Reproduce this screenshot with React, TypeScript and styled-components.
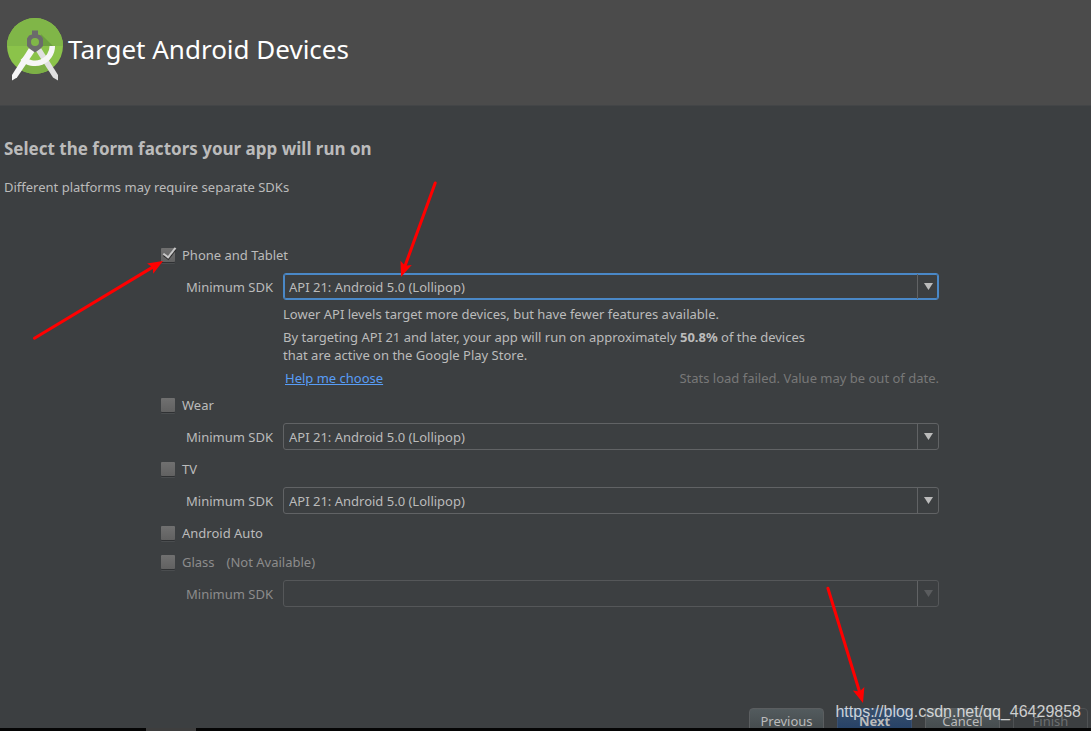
import React from "react";
import styled, { createGlobalStyle, css } from "styled-components";

const GlobalStyle = createGlobalStyle`
  *, *::before, *::after { box-sizing: border-box; }
  body {
    margin: 0;
    background: #3c3f41;
    color: #bbbbbb;
    font: 13px/18px "Noto Sans", "Open Sans", sans-serif;
  }
`;

const Page = styled.div`
  position: relative;
  display: flex;
  flex-direction: column;
  min-height: 100vh;
  overflow: hidden;
`;

const Header = styled.header`
  display: flex;
  align-items: flex-start;
  gap: 4px;
  height: 106px;
  padding: 16px 6px;
  background: #4b4b4b;
  border-bottom: 1px solid #434547;
`;

const Logo = styled.svg`
  flex: none;
  width: 58px;
  height: 66px;
`;

const Title = styled.h1`
  margin: 0;
  color: #ffffff;
  font-size: 26px;
  line-height: 66px;
  font-weight: 400;
`;

const Main = styled.main`
  flex: 1;
  padding: 31px 4px 0;
`;

const Heading = styled.h2`
  margin: 0 0 17px;
  font-size: 17px;
  line-height: 24px;
  font-weight: 700;
`;

const Intro = styled.p`
  margin: 0;
`;

const Form = styled.form`
  display: flex;
  flex-direction: column;
  gap: 8px;
  margin: 48px 148px 0 157px;
`;

const CheckRow = styled.div`
  display: flex;
  align-items: center;
  height: 21px;
`;

const CheckLabel = styled.label<{ $dim?: boolean }>`
  display: flex;
  align-items: center;
  gap: 7px;
  color: ${(p) => (p.$dim ? "#8c8c8c" : "#bbbbbb")};
`;

const tick = css`
  &::after {
    content: "";
    position: absolute;
    left: 5px;
    top: -3px;
    width: 7px;
    height: 13px;
    border: solid #c8c8c8;
    border-width: 0 2px 2px 0;
    transform: rotate(38deg);
    filter: drop-shadow(1px 1px 0 #2b2b2b);
  }
`;

const CheckBox = styled.input`
  appearance: none;
  position: relative;
  width: 14px;
  height: 14px;
  margin: 0;
  border-radius: 1px;
  background: linear-gradient(#707070, #616161);
  box-shadow: 0 1px 0 #2f3133, 0 2px 0 #4a4d4f;
  &:checked {
    ${tick}
  }
`;

const Note = styled.span`
  margin-left: 12px;
  color: #8c8c8c;
`;

const SdkRow = styled.div`
  display: flex;
  align-items: center;
  padding-left: 25px;
`;

const SdkLabel = styled.label<{ $dim?: boolean }>`
  flex: none;
  width: 97px;
  color: ${(p) => (p.$dim ? "#8c8c8c" : "#bbbbbb")};
`;

const Combo = styled.div<{ $state: "focused" | "normal" | "disabled" }>`
  display: flex;
  flex: 1;
  position: relative;
  height: 27px;
  border-radius: 3px;
  border: 1px solid
    ${(p) => ({ focused: "#4a88c7", normal: "#616365", disabled: "#555759" })[p.$state]};
  ${(p) => p.$state === "focused" && "box-shadow: inset 0 0 0 1px #4a88c7;"}
  color: ${(p) => (p.$state === "disabled" ? "#5a5c5e" : "#bbbbbb")};
`;

const ComboSelect = styled.select`
  appearance: none;
  flex: 1;
  min-width: 0;
  padding: 0 26px 0 5px;
  border: 0;
  outline: 0;
  background: transparent;
  color: inherit;
  font: inherit;
  opacity: 1;
`;

const ComboArrow = styled.span`
  position: absolute;
  top: 0;
  right: 0;
  bottom: 0;
  display: flex;
  align-items: center;
  justify-content: center;
  width: 21px;
  border-left: 1px solid #616365;
  pointer-events: none;
`;

const Details = styled.div`
  display: flex;
  flex-direction: column;
  gap: 5px;
  margin: -3px 0 -1px 122px;
  p {
    margin: 0;
  }
`;

const Description = styled.p`
  max-width: 540px;
`;

const HelpRow = styled.div`
  display: flex;
  justify-content: space-between;
  padding-left: 2px;
`;

const HelpLink = styled.a`
  color: #589df6;
`;

const Stats = styled.span`
  color: #787878;
`;

const Footer = styled.footer`
  display: flex;
  justify-content: flex-end;
  align-items: flex-start;
  gap: 13px;
  height: 20px;
  padding-right: 3px;
  overflow: hidden;
`;

const Button = styled.button<{ $primary?: boolean }>`
  flex: none;
  width: 75px;
  height: 26px;
  padding: 0;
  border: 1px solid ${(p) => (p.$primary ? "#3b5070" : "#5b5e60")};
  border-radius: 4px;
  background: ${(p) =>
    p.$primary ? "linear-gradient(#384f6b, #233f66)" : "linear-gradient(#535b5e, #43494b)"};
  color: #bbbbbb;
  font: inherit;
  font-weight: ${(p) => (p.$primary ? 700 : 400)};
  &:disabled {
    background: transparent;
    border-color: #4f5254;
    color: #6d6f71;
  }
`;

const Taskbar = styled.div`
  height: 3px;
  padding-left: 146px;
  background: #050505;
  &::before {
    content: "";
    display: block;
    width: 50px;
    height: 3px;
    background: #3e3e3e;
  }
`;

const Arrows = styled.svg`
  position: absolute;
  top: 0;
  left: 0;
  pointer-events: none;
`;

const Watermark = styled.span`
  position: absolute;
  right: 10px;
  bottom: 10px;
  color: rgba(255, 255, 255, 0.75);
  font: 16px/18px "Liberation Sans", Arial, sans-serif;
`;

const LOLLIPOP = "API 21: Android 5.0 (Lollipop)";

function StudioLogo() {
  return (
    <Logo viewBox="0 0 58 66" aria-hidden="true">
      <defs>
        <clipPath id="disc">
          <circle cx="29" cy="30" r="28" />
        </clipPath>
      </defs>
      <circle cx="29" cy="30" r="28" fill="#8bc34a" />
      <g clipPath="url(#disc)">
        <rect x="0" y="0" width="58" height="30" fill="#80b648" />
        <path d="M35 18 47 30H37Z" fill="#6c9f3e" />
        <path d="M16 46 Q29 54 40 47 L47 60 H12Z" fill="#7db046" />
      </g>
      <path d="M23 32 6 59 V64.500 L11 61.500 29 35Z" fill="#f6f6f6" />
      <path d="M35 32 52 59 V64.500 L47 61.500 30 35Z" fill="#e0e0e0" />
      <path d="M46.300 30 A17.300 17.300 0 0 1 16.500 42" fill="none" stroke="#f6f6f6" strokeWidth="5.500" />
      <path d="M26 14.500h6v4l3 1 2 3v7.500l-3 3-5 3.500-5-3.500-3-3v-7.500l2-3 3-1z" fill="#6b6b6b" />
      <circle cx="29" cy="26" r="4" fill="#80b648" />
    </Logo>
  );
}

type SdkProps = { id: string; value?: string; state: "focused" | "normal" | "disabled" };

function SdkField({ id, value = "", state }: SdkProps) {
  const disabled = state === "disabled";
  return (
    <SdkRow>
      <SdkLabel htmlFor={id} $dim={disabled}>
        Minimum SDK
      </SdkLabel>
      <Combo $state={state}>
        <ComboSelect id={id} disabled={disabled}>
          <option>{value}</option>
        </ComboSelect>
        <ComboArrow>
          <svg width="9" height="7" viewBox="0 0 9 7" aria-hidden="true">
            <path d="M0 0h9L4.500 7z" fill="currentColor" />
          </svg>
        </ComboArrow>
      </Combo>
    </SdkRow>
  );
}

type FactorProps = { label: string; checked?: boolean; disabled?: boolean; note?: string };

function FormFactor({ label, checked, disabled, note }: FactorProps) {
  return (
    <CheckRow>
      <CheckLabel $dim={disabled}>
        <CheckBox type="checkbox" defaultChecked={checked} disabled={disabled} />
        {label}
      </CheckLabel>
      {note && <Note>{note}</Note>}
    </CheckRow>
  );
}

const ARROWS = [
  { x: 163, y: 261, length: 150, angle: -31 },
  { x: 401, y: 277, length: 100, angle: 110 },
  { x: 863, y: 703, length: 120, angle: 73 },
];

function PointerArrows() {
  return (
    <Arrows width="100%" height="100%" aria-hidden="true">
      {ARROWS.map((a) => (
        <g key={a.x} transform={`translate(${a.x} ${a.y}) rotate(${a.angle})`}>
          <path d={`M${-a.length} 0H-10`} stroke="#ff0000" strokeWidth="3" strokeLinecap="round" />
          <path d="M0 0-15-6-12 0-15 6z" fill="#ff0000" />
        </g>
      ))}
    </Arrows>
  );
}

export default function App() {
  return (
    <Page>
      <GlobalStyle />
      <Header>
        <StudioLogo />
        <Title>Target Android Devices</Title>
      </Header>
      <Main>
        <Heading>Select the form factors your app will run on</Heading>
        <Intro>Different platforms may require separate SDKs</Intro>
        <Form>
          <FormFactor label="Phone and Tablet" checked />
          <SdkField id="sdk-phone" value={LOLLIPOP} state="focused" />
          <Details>
            <p>Lower API levels target more devices, but have fewer features available.</p>
            <Description>
              By targeting API 21 and later, your app will run on approximately <b>50.8%</b> of the
              devices that are active on the Google Play Store.
            </Description>
            <HelpRow>
              <HelpLink href="#help">Help me choose</HelpLink>
              <Stats>Stats load failed. Value may be out of date.</Stats>
            </HelpRow>
          </Details>
          <FormFactor label="Wear" />
          <SdkField id="sdk-wear" value={LOLLIPOP} state="normal" />
          <FormFactor label="TV" />
          <SdkField id="sdk-tv" value={LOLLIPOP} state="normal" />
          <FormFactor label="Android Auto" />
          <FormFactor label="Glass" disabled note="(Not Available)" />
          <SdkField id="sdk-glass" state="disabled" />
        </Form>
      </Main>
      <Footer>
        <Button type="button">Previous</Button>
        <Button type="button" $primary>
          Next
        </Button>
        <Button type="button">Cancel</Button>
        <Button type="button" disabled>
          Finish
        </Button>
      </Footer>
      <Taskbar />
      <PointerArrows />
      <Watermark>https://blog.csdn.net/qq_46429858</Watermark>
    </Page>
  );
}
